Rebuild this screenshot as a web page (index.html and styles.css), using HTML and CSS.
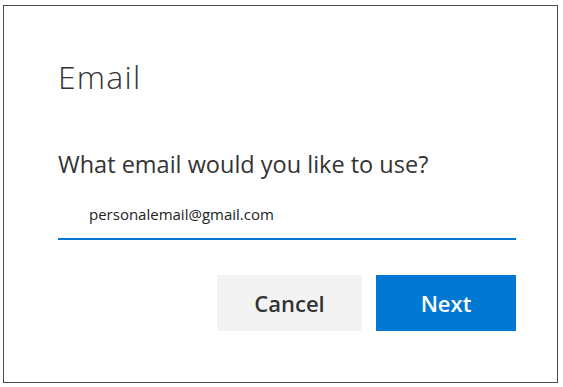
FILE: index.html
```html
<!DOCTYPE html>
<html lang="en">
<head>
<meta charset="utf-8">
<title>Email</title>
<link rel="stylesheet" href="styles.css">
</head>
<body>
<div class="dialog">
  <h1 class="title">Email</h1>
  <p class="question">What email would you like to use?</p>
  <div class="field"><span class="value">personalemail@gmail.com</span></div>
  <div class="actions">
    <button class="btn btn-cancel" type="button">Cancel</button>
    <button class="btn btn-next" type="button">Next</button>
  </div>
</div>
</body>
</html>
```
FILE: styles.css
```css
html, body {
  margin: 0;
  padding: 0;
  background: #ffffff;
}
body {
  font-family: "Open Sans", "Noto Sans", "Liberation Sans", sans-serif;
  color: #333333;
}
.dialog {
  box-sizing: border-box;
  width: 555px;
  height: 378px;
  margin: 5px 0 0 3px;
  border: 1px solid #4a4a4a;
  padding: 51px 41px 0 54px;
  display: flex;
  flex-direction: column;
}
.title {
  margin: 0;
  font-size: 32px;
  line-height: 40px;
  font-weight: 300;
  letter-spacing: 1.2px;
  color: #333333;
}
.question {
  margin: 53px 0 0 0;
  font-size: 23.5px;
  line-height: 28px;
  font-weight: 400;
  color: #333333;
}
.field {
  margin: 26px 0 0 0;
  width: 458px;
  padding: 0 0 14px 31px;
  box-sizing: border-box;
  border-bottom: 2px solid #0078d4;
  font-size: 15px;
  line-height: 20px;
  color: #222222;
}
.actions {
  margin-top: 35px;
  display: flex;
  justify-content: flex-end;
  gap: 14px;
}
.btn {
  border: none;
  height: 56px;
  font-family: inherit;
  font-size: 22px;
  font-weight: 600;
  padding: 0;
  cursor: pointer;
}
.btn-cancel {
  width: 145px;
  background: #f3f3f3;
  color: #333333;
}
.btn-next {
  width: 140px;
  background: #0078d4;
  color: #ffffff;
}
```
